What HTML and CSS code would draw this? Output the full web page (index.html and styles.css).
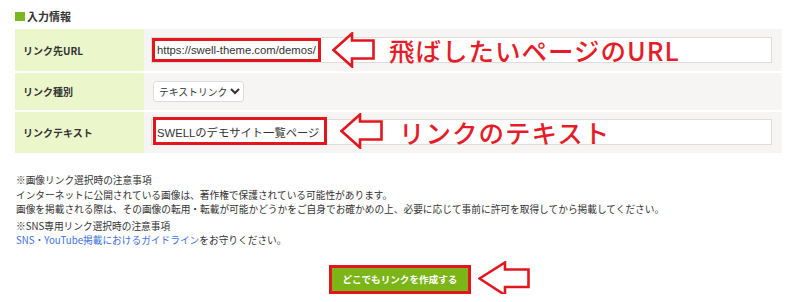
FILE: index.html
```html
<!DOCTYPE html>
<html lang="ja">
<head>
    <meta charset="UTF-8">
    <meta name="viewport" content="width=device-width, initial-scale=1.0">
    <title>どこでもリンク作成</title>
    <link rel="stylesheet" href="styles.css">
</head>
<body>
    <div class="panel">
        <h3 class="panel-title"><span class="title-mark"></span>入力情報</h3>

        <div class="form-table">
            <div class="form-row row-url">
                <div class="form-label">リンク先URL</div>
                <div class="form-value">
                    <input type="text" class="text-input" value="https://swell-theme.com/demos/">
                </div>
                <!-- 注釈 -->
                <div class="mark mark-url"></div>
                <svg class="arrow arrow-url" width="43" height="36" viewBox="0 0 43 36">
                    <polygon points="1.5,18 20,1.5 20,8.5 41.5,8.5 41.5,26.5 20,26.5 20,34.5" />
                </svg>
                <div class="note-big note-url">飛ばしたいページのURL</div>
            </div>

            <div class="form-row row-type">
                <div class="form-label">リンク種別</div>
                <div class="form-value">
                    <select class="select-input">
                        <option>テキストリンク</option>
                        <option>画像リンク</option>
                        <option>SNSリンク</option>
                    </select>
                </div>
            </div>

            <div class="form-row row-text">
                <div class="form-label">リンクテキスト</div>
                <div class="form-value">
                    <input type="text" class="text-input" value="SWELLのデモサイト一覧ページ">
                </div>
                <div class="mark mark-text"></div>
                <svg class="arrow arrow-text" width="43" height="36" viewBox="0 0 43 36">
                    <polygon points="1.5,18 20,1.5 20,8.5 41.5,8.5 41.5,26.5 20,26.5 20,34.5" />
                </svg>
                <div class="note-big note-text">リンクのテキスト</div>
            </div>
        </div>

        <div class="notes">
            <p>※画像リンク選択時の注意事項<br>
            インターネットに公開されている画像は、著作権で保護されている可能性があります。<br>
            画像を掲載される際は、その画像の転用・転載が可能かどうかをご自身でお確かめの上、必要に応じて事前に許可を取得してから掲載してください。</p>
            <p>※SNS専用リンク選択時の注意事項<br>
            <a href="#">SNS・YouTube掲載におけるガイドライン</a>をお守りください。</p>
        </div>

        <div class="submit-area">
            <div class="btn-frame">
                <button type="button" class="btn-create">どこでもリンクを作成する</button>
                <svg class="arrow arrow-btn" width="52" height="36" viewBox="0 0 52 36">
                    <polygon points="1.5,17.5 27,1.5 27,8.5 50.5,8.5 50.5,26 27,26 27,34" />
                </svg>
            </div>
        </div>
    </div>
</body>
</html>
```

FILE: styles.css
```css
body {
    margin: 0;
    background: #fff;
    color: #333;
    font-family: 'Noto Sans CJK JP', 'Noto Sans', sans-serif;
}

.panel {
    padding: 9px 18px 0 15px;
}

.panel-title {
    display: flex;
    align-items: center;
    margin: 0 0 6px;
    font-size: 11px;
    line-height: 14px;
    font-weight: bold;
    color: #333;
}

.title-mark {
    display: inline-block;
    width: 10px;
    height: 9px;
    margin-right: 2px;
    background: #7ab723;
}

.form-row {
    position: relative;
    display: flex;
    margin-bottom: 2px;
}

.form-label {
    width: 121px;
    padding-left: 8px;
    display: flex;
    align-items: center;
    background: #ebf6cb;
    font-size: 10px;
    font-weight: bold;
    color: #333;
}

.form-value {
    flex: 1;
    display: flex;
    align-items: center;
    background: #f6f5f3;
    padding: 8px 10px 8px 7px;
}

.row-text .form-value {
    padding-top: 7px;
}

.text-input {
    width: 100%;
    height: 26px;
    box-sizing: border-box;
    margin: 0;
    padding: 0 5px;
    border: 1px solid #dcdcdc;
    background: #fff;
    color: #333;
    font-family: 'Liberation Sans', 'Noto Sans CJK JP', sans-serif;
    font-size: 11.3px;
}

.select-input {
    width: 91px;
    height: 21px;
    margin: 0 0 0 2px;
    padding: 0 0 0 1px;
    border: 1px solid #dcdcdc;
    border-radius: 3px;
    background: #fff;
    color: #333;
    font-family: 'Noto Sans CJK JP', sans-serif;
    font-size: 9.8px;
}

/* 赤い注釈 */
.mark {
    position: absolute;
    box-sizing: border-box;
    border: 3px solid #e3161e;
}

.mark-url {
    left: 137px;
    top: 9px;
    width: 169px;
    height: 24px;
}

.mark-text {
    left: 138px;
    top: 5px;
    width: 174px;
    height: 28px;
}

.arrow {
    position: absolute;
}

.arrow polygon {
    fill: #fff;
    stroke: #e3161e;
    stroke-width: 2.6;
    stroke-linejoin: miter;
}

.arrow-url {
    left: 317px;
    top: 3px;
}

.arrow-text {
    left: 325px;
    top: 1px;
}

.note-big {
    position: absolute;
    color: #e61d29;
    font-family: 'Noto Sans CJK JP', sans-serif;
    font-weight: 500;
    font-size: 25.5px;
    line-height: 30px;
    letter-spacing: 1px;
    white-space: nowrap;
}

.note-url {
    left: 374px;
    top: 6px;
}

.note-text {
    left: 384px;
    top: 5px;
}

.notes {
    margin-top: 20px;
    padding-left: 1px;
    font-size: 9.7px;
    line-height: 14.5px;
    color: #333;
}

.notes p {
    margin: 0 0 2px;
}

.notes a {
    color: #3a6fe2;
    text-decoration: none;
}

.submit-area {
    display: flex;
    justify-content: center;
    margin-top: 17px;
    padding-left: 3px;
}

.btn-frame {
    position: relative;
    border: 3px solid #e3161e;
}

.btn-create {
    display: block;
    height: 23px;
    margin: 0;
    padding: 0 11px;
    border: none;
    background: #7cb518;
    color: #fff;
    font-family: 'Noto Sans CJK JP', sans-serif;
    font-size: 9.6px;
    font-weight: bold;
    cursor: pointer;
}

.arrow-btn {
    left: calc(100% + 10px);
    top: -7px;
}
```
